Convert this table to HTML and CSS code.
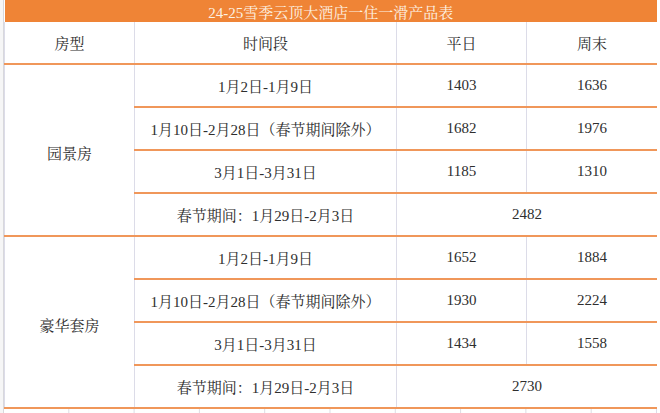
FILE: index.html
```html
<!DOCTYPE html>
<html lang="zh-CN">
<head>
<meta charset="utf-8">
<title>24-25雪季云顶大酒店一住一滑产品表</title>
<link rel="stylesheet" href="styles.css">
</head>
<body>
<div class="sheet">
  <div class="gutter gutter-left"></div>
  <div class="main">
    <table class="price">
      <colgroup>
        <col class="c-type"><col class="c-period"><col class="c-num"><col class="c-num2">
      </colgroup>
      <tr class="title-row"><td colspan="4">24-25雪季云顶大酒店一住一滑产品表</td></tr>
      <tr class="head-row"><td>房型</td><td>时间段</td><td>平日</td><td>周末</td></tr>
      <tr><td rowspan="4" class="room">园景房</td><td>1月2日-1月9日</td><td>1403</td><td>1636</td></tr>
      <tr><td>1月10日-2月28日（春节期间除外）</td><td>1682</td><td>1976</td></tr>
      <tr><td>3月1日-3月31日</td><td>1185</td><td>1310</td></tr>
      <tr><td>春节期间：1月29日-2月3日</td><td colspan="2">2482</td></tr>
      <tr><td rowspan="4" class="room">豪华套房</td><td>1月2日-1月9日</td><td>1652</td><td>1884</td></tr>
      <tr><td>1月10日-2月28日（春节期间除外）</td><td>1930</td><td>2224</td></tr>
      <tr><td>3月1日-3月31日</td><td>1434</td><td>1558</td></tr>
      <tr><td>春节期间：1月29日-2月3日</td><td colspan="2">2730</td></tr>
    </table>
    <div class="grid-tail"></div>
  </div>
  <div class="gutter gutter-right"></div>
</div>
</body>
</html>
```
FILE: styles.css
```css
html, body {
  margin: 0;
  padding: 0;
  background: #ffffff;
  overflow: hidden;
}
.sheet {
  display: flex;
  width: 660px;
  height: 413px;
}
.gutter {
  flex: none;
  height: 413px;
  background-image: repeating-linear-gradient(to bottom, transparent 0 42px, #d4d4d8 42px 43px, transparent 43px 43px);
  background-size: 100% 21.5px;
}
.gutter-left {
  width: 3px;
  border-right: 1px solid #d8d8dc;
  background-color: #f6f6f6;
}
.gutter-right {
  width: 3px;
  background-color: #ffffff;
}
.main {
  flex: none;
  width: 653px;
  display: flex;
  flex-direction: column;
}
.price {
  width: 653px;
  table-layout: fixed;
  border-collapse: collapse;
  font-family: "Liberation Serif", "Noto Serif CJK SC", "Noto Sans CJK SC", serif;
  font-size: 15px;
  color: #2e2e2e;
}
.c-type { width: 130px; }
.c-period { width: 262px; }
.c-num { width: 130px; }
.c-num2 { width: 131px; }
.price td {
  height: 41px;
  padding: 0;
  text-align: center;
  vertical-align: middle;
  border-bottom: 2px solid #f0975a;
  border-right: 1px solid #dcdce8;
  border-left: 1px solid #dcdce8;
  white-space: nowrap;
}
.price .title-row td {
  height: 22px;
  background: #ef8436;
  color: #fdf1e2;
  font-size: 15px;
  border-bottom: 0;
  border-left: 0;
  border-right: 1px solid #e07a30;
}
.price .head-row td {
  height: 41px;
}
.price td.room {
  padding-top: 4px;
}
.grid-tail {
  flex: 1;
  background-image: repeating-linear-gradient(to right, transparent 0 64px, #dcdce4 64px 65px);
  background-size: 65.3px 100%;
  border-right: 1px solid #dcdce8;
}
```
